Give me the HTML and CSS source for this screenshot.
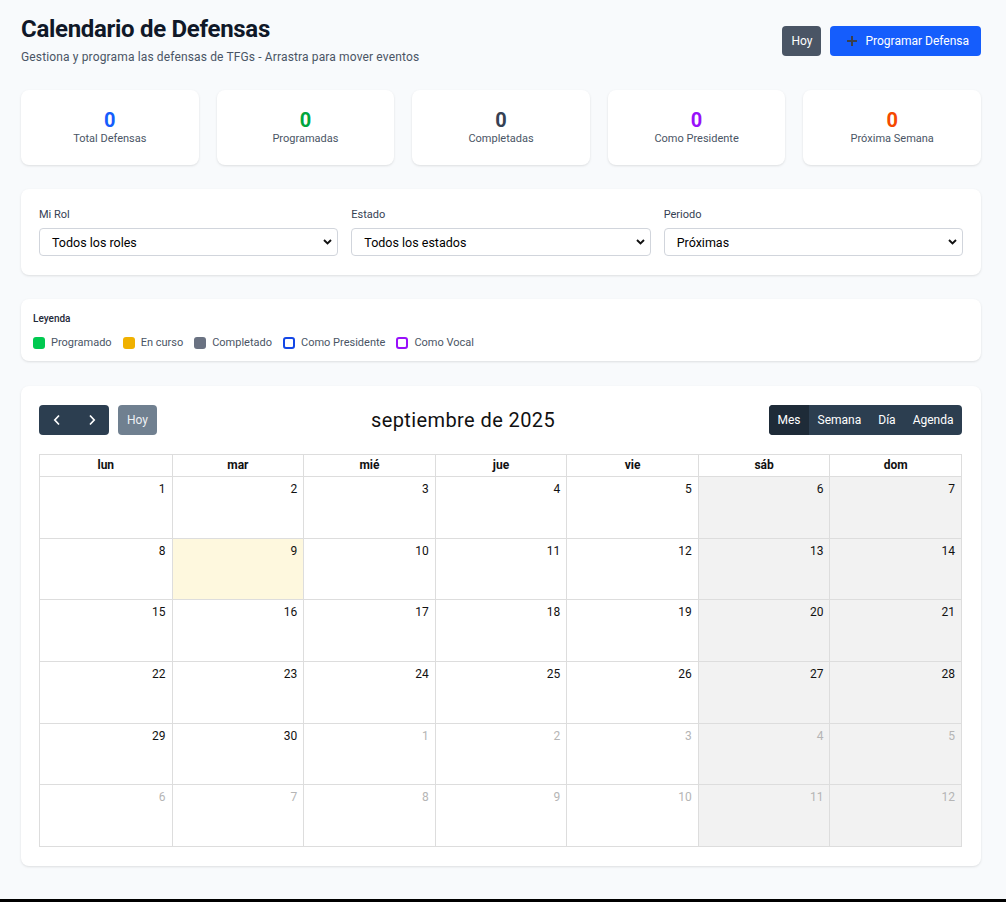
FILE: index.html
```html
<!DOCTYPE html>
<html lang="es">
<head>
<meta charset="utf-8">
<title>Calendario de Defensas</title>
<link rel="stylesheet" href="styles.css">
</head>
<body>
<div class="page">
  <header class="head">
    <div class="head-text">
      <h1 class="title">Calendario de Defensas</h1>
      <p class="subtitle">Gestiona y programa las defensas de TFGs - Arrastra para mover eventos</p>
    </div>
    <div class="head-actions">
      <button class="btn btn-gray">Hoy</button>
      <button class="btn btn-blue">
        <svg class="plus" width="12" height="12" viewBox="0 0 12 12"><path d="M6 1v10M1 6h10" stroke="#3a3f4a" stroke-width="2" fill="none"/></svg>
        <span>Programar Defensa</span>
      </button>
    </div>
  </header>

  <section class="stats">
    <div class="card stat"><div class="stat-num c-blue">0</div><div class="stat-label">Total Defensas</div></div>
    <div class="card stat"><div class="stat-num c-green">0</div><div class="stat-label">Programadas</div></div>
    <div class="card stat"><div class="stat-num c-gray">0</div><div class="stat-label">Completadas</div></div>
    <div class="card stat"><div class="stat-num c-purple">0</div><div class="stat-label">Como Presidente</div></div>
    <div class="card stat"><div class="stat-num c-orange">0</div><div class="stat-label">Próxima Semana</div></div>
  </section>

  <section class="card filters">
    <div class="field">
      <label class="field-label">Mi Rol</label>
      <div class="select" role="combobox"><span>Todos los roles</span><svg width="9" height="6" viewBox="0 0 9 6"><path d="M1 1l3.5 3.5L8 1" stroke="#111" stroke-width="1.9" fill="none"/></svg></div>
    </div>
    <div class="field">
      <label class="field-label">Estado</label>
      <div class="select" role="combobox"><span>Todos los estados</span><svg width="9" height="6" viewBox="0 0 9 6"><path d="M1 1l3.5 3.5L8 1" stroke="#111" stroke-width="1.9" fill="none"/></svg></div>
    </div>
    <div class="field">
      <label class="field-label">Periodo</label>
      <div class="select" role="combobox"><span>Próximas</span><svg width="9" height="6" viewBox="0 0 9 6"><path d="M1 1l3.5 3.5L8 1" stroke="#111" stroke-width="1.9" fill="none"/></svg></div>
    </div>
  </section>

  <section class="card legend">
    <div class="legend-title">Leyenda</div>
    <div class="legend-items">
      <div class="legend-item"><span class="sw sw-green"></span>Programado</div>
      <div class="legend-item"><span class="sw sw-yellow"></span>En curso</div>
      <div class="legend-item"><span class="sw sw-gray"></span>Completado</div>
      <div class="legend-item"><span class="sw sw-blue-o"></span>Como Presidente</div>
      <div class="legend-item"><span class="sw sw-purple-o"></span>Como Vocal</div>
    </div>
  </section>

  <section class="card calendar">
    <div class="toolbar">
      <div class="tb-left">
        <div class="nav-group">
          <button class="nav-btn"><svg width="8" height="12" viewBox="0 0 8 12"><path d="M6 1.5L1.8 6 6 10.5" stroke="#fff" stroke-width="1.7" fill="none"/></svg></button>
          <button class="nav-btn"><svg width="8" height="12" viewBox="0 0 8 12"><path d="M2 1.5L6.2 6 2 10.5" stroke="#fff" stroke-width="1.7" fill="none"/></svg></button>
        </div>
        <button class="tb-today">Hoy</button>
      </div>
      <div class="tb-label">septiembre de 2025</div>
      <div class="view-group">
        <button class="view-btn active">Mes</button>
        <button class="view-btn">Semana</button>
        <button class="view-btn">Día</button>
        <button class="view-btn">Agenda</button>
      </div>
    </div>

    <div class="month">
      <div class="month-head">
        <div class="hcell">lun</div><div class="hcell">mar</div><div class="hcell">mié</div><div class="hcell">jue</div><div class="hcell">vie</div><div class="hcell">sáb</div><div class="hcell">dom</div>
      </div>
      <div class="week">
        <div class="day">1</div><div class="day">2</div><div class="day">3</div><div class="day">4</div><div class="day">5</div><div class="day we">6</div><div class="day we">7</div>
      </div>
      <div class="week">
        <div class="day">8</div><div class="day today">9</div><div class="day">10</div><div class="day">11</div><div class="day">12</div><div class="day we">13</div><div class="day we">14</div>
      </div>
      <div class="week">
        <div class="day">15</div><div class="day">16</div><div class="day">17</div><div class="day">18</div><div class="day">19</div><div class="day we">20</div><div class="day we">21</div>
      </div>
      <div class="week">
        <div class="day">22</div><div class="day">23</div><div class="day">24</div><div class="day">25</div><div class="day">26</div><div class="day we">27</div><div class="day we">28</div>
      </div>
      <div class="week">
        <div class="day">29</div><div class="day">30</div><div class="day off">1</div><div class="day off">2</div><div class="day off">3</div><div class="day we off">4</div><div class="day we off">5</div>
      </div>
      <div class="week">
        <div class="day off">6</div><div class="day off">7</div><div class="day off">8</div><div class="day off">9</div><div class="day off">10</div><div class="day we off">11</div><div class="day we off">12</div>
      </div>
    </div>
  </section>
</div>
<div class="bottom-bar"></div>
</body>
</html>
```

FILE: styles.css
```css
* { box-sizing: border-box; }
html, body { margin: 0; padding: 0; }
body {
  background: #f8fafc;
  font-family: Roboto, "Liberation Sans", sans-serif;
  color: #101828;
}
.page {
  height: 899px;
  padding: 13px 25px 0 21px;
}
.bottom-bar { height: 3px; background: #000; }

.head {
  display: flex;
  justify-content: space-between;
  align-items: flex-start;
  margin-bottom: 25px;
}
.title {
  margin: 0;
  font-size: 24px;
  line-height: 32px;
  font-weight: 700;
  color: #101828;
  letter-spacing: -0.3px;
}
.subtitle {
  margin: 4px 0 0;
  font-size: 12px;
  line-height: 16px;
  color: #4a5565;
  letter-spacing: 0.14px;
}
.head-actions {
  display: flex;
  gap: 9px;
  margin-top: 13px;
}
.btn {
  height: 30px;
  border: 0;
  border-radius: 4px;
  font-family: inherit;
  font-size: 12px;
  color: #fff;
  display: flex;
  align-items: center;
  cursor: pointer;
}
.btn-gray { background: #4a5565; padding: 0 9px; }
.btn-blue { background: #155dfc; padding: 0 12px 0 16px; gap: 7px; }
.plus { display: block; }

.card {
  background: #fff;
  border-radius: 8px;
  box-shadow: 0 1px 3px rgba(0,0,0,0.08), 0 1px 2px rgba(0,0,0,0.04);
}

.stats {
  display: grid;
  grid-template-columns: repeat(5, 1fr);
  gap: 18px;
  margin-bottom: 24px;
}
.stat {
  height: 75px;
  padding-top: 18px;
  text-align: center;
}
.stat-num {
  font-size: 20px;
  line-height: 24px;
  font-weight: 700;
}
.stat-label {
  font-size: 11px;
  line-height: 14px;
  color: #4a5565;
}
.c-blue { color: #155dfc; }
.c-green { color: #00a63e; }
.c-gray { color: #364153; }
.c-purple { color: #9810fa; }
.c-orange { color: #f54900; }

.filters {
  display: grid;
  grid-template-columns: repeat(3, 1fr);
  gap: 13px;
  padding: 19px 18px 19px;
  margin-bottom: 24px;
}
.field-label {
  display: block;
  font-size: 11px;
  line-height: 14px;
  color: #364153;
  margin-bottom: 6px;
}
.select {
  height: 28px;
  border: 1px solid #d1d5dc;
  border-radius: 4px;
  padding: 0 5px 0 12px;
  display: flex;
  align-items: center;
  justify-content: space-between;
  font-size: 12.5px;
  color: #000;
  background: #fff;
}
.select svg { display: block; }

.legend {
  padding: 13px 12px 11px;
  margin-bottom: 25px;
}
.legend-title {
  font-size: 10px;
  line-height: 14px;
  font-weight: 500;
  color: #1e2939;
  margin-bottom: 10px;
}
.legend-items {
  display: flex;
  gap: 11px;
}
.legend-item {
  display: flex;
  align-items: center;
  gap: 6px;
  font-size: 11px;
  line-height: 14px;
  color: #4a5565;
}
.sw {
  width: 12px;
  height: 12px;
  border-radius: 3px;
  display: block;
}
.sw-green { background: #00c950; }
.sw-yellow { background: #f0b100; }
.sw-gray { background: #6a7282; }
.sw-blue-o { border: 2px solid #1447e6; background: #fff; }
.sw-purple-o { border: 2px solid #9810fa; background: #fff; }

.calendar {
  padding: 19px 19px 19px 18px;
}
.toolbar {
  display: flex;
  align-items: center;
  height: 30px;
  margin-bottom: 19px;
}
.tb-left {
  display: flex;
  gap: 9px;
}
.nav-group {
  display: flex;
  background: #2c3e50;
  border-radius: 4px;
  width: 70px;
  height: 30px;
}
.nav-btn {
  flex: 1;
  border: 0;
  background: transparent;
  display: flex;
  align-items: center;
  justify-content: center;
  padding: 0;
}
.tb-today {
  height: 30px;
  width: 39px;
  border: 0;
  border-radius: 4px;
  background: #708090;
  color: #eef1f4;
  font-family: inherit;
  font-size: 12px;
  padding: 0;
}
.tb-label {
  flex: 1;
  text-align: center;
  font-size: 20px;
  letter-spacing: 0.4px;
  color: #111;
}
.view-group {
  display: flex;
  height: 30px;
  background: #2c3e50;
  border-radius: 4px;
  overflow: hidden;
}
.view-btn {
  border: 0;
  background: transparent;
  color: #fff;
  font-family: inherit;
  font-size: 12px;
  padding: 0 8.5px;
}
.view-btn.active { background: #1e2b38; }

.month {
  border: 1px solid #ddd;
  height: 393px;
  display: flex;
  flex-direction: column;
}
.month-head {
  display: grid;
  grid-template-columns: repeat(7, 1fr);
  height: 22px;
  border-bottom: 1px solid #ddd;
}
.hcell {
  font-size: 12px;
  font-weight: 700;
  text-align: center;
  line-height: 21px;
  color: #111;
  border-left: 1px solid #ddd;
}
.hcell:first-child { border-left: 0; }
.week {
  flex: 1;
  display: grid;
  grid-template-columns: repeat(7, 1fr);
  border-bottom: 1px solid #ddd;
}
.week:last-child { border-bottom: 0; }
.day {
  border-left: 1px solid #ddd;
  text-align: right;
  padding: 4px 6px 0 0;
  font-size: 12px;
  line-height: 16px;
  color: #111;
}
.day:first-child { border-left: 0; }
.day.we { background: #f2f2f2; }
.day.today { background: #fef8de; }
.day.off { color: #b5b5b5; }
```
